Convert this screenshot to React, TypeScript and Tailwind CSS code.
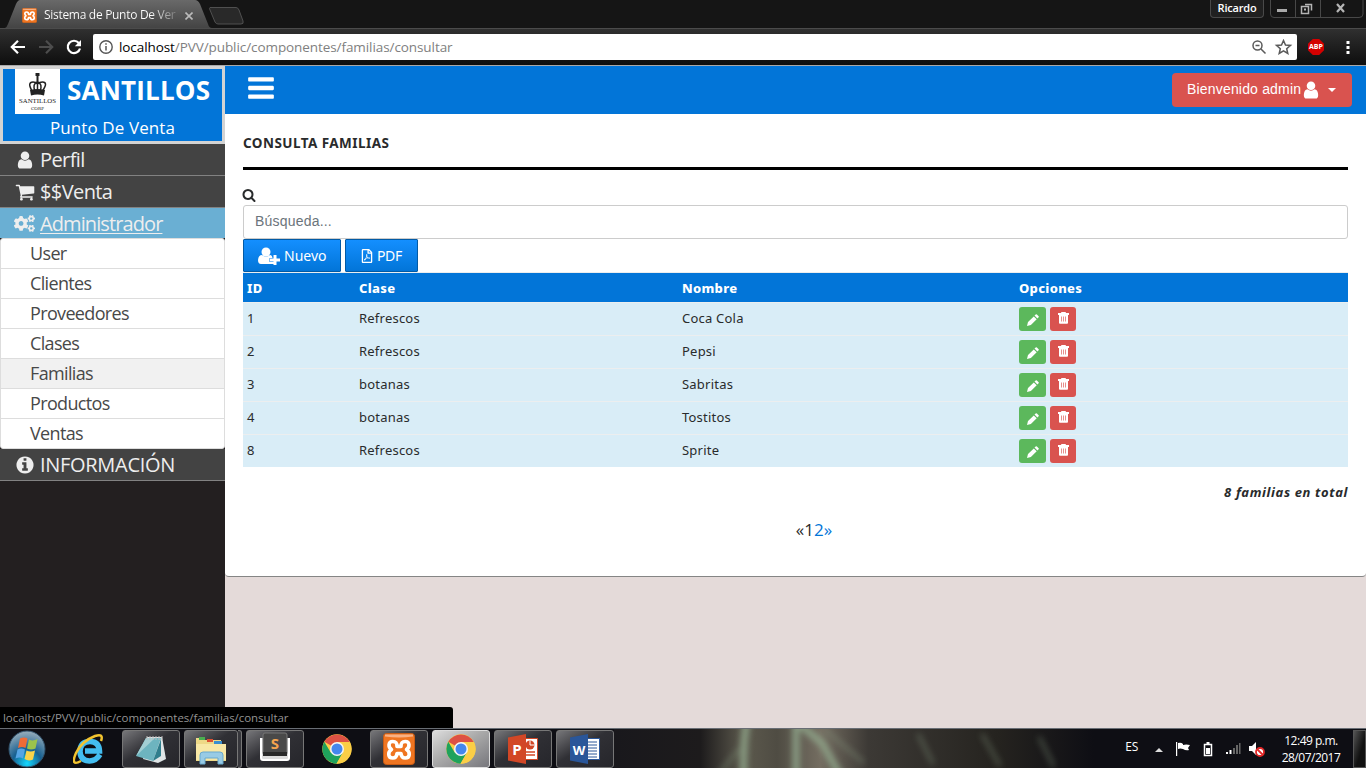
import React from "react";
import { FaCogs, FaRegFilePdf } from "react-icons/fa";

const P = {
  user: "M1536 1399q0 109-62.5 187t-150.5 78h-854q-88 0-150.5-78t-62.5-187q0-85 8.500-160.500t31.500-152 58.500-131 94-89 134.500-34.500q131 128 313 128t313-128q76 0 134.500 34.500t94 89 58.500 131 31.500 152 8.500 160.500zm-256-887q0 159-112.500 271.500t-271.500 112.500-271.500-112.500-112.500-271.500 112.500-271.500 271.500-112.500 271.500 112.500 112.500 271.500z",
  cart: "M704 1536q0 52-38 90t-90 38-90-38-38-90 38-90 90-38 90 38 38 90zm896 0q0 52-38 90t-90 38-90-38-38-90 38-90 90-38 90 38 38 90zm128-1088v512q0 24-16.500 42.500t-40.500 21.500l-1044 122q13 60 13 70 0 16-24 64h920q26 0 45 19t19 45-19 45-45 19h-1024q-26 0-45-19t-19-45q0-11 8-31.500t16-36 21.500-40 15.500-29.500l-177-823h-204q-26 0-45-19t-19-45 19-45 45-19h256q16 0 28.500 6.500t19.500 15.500 13 24.500 8 26 5.500 29.500 4.500 26h1201q26 0 45 19t19 45z",
  bars: "M1664 1344v128q0 26-19 45t-45 19h-1408q-26 0-45-19t-19-45v-128q0-26 19-45t45-19h1408q26 0 45 19t19 45zm0-512v128q0 26-19 45t-45 19h-1408q-26 0-45-19t-19-45v-128q0-26 19-45t45-19h1408q26 0 45 19t19 45zm0-512v128q0 26-19 45t-45 19h-1408q-26 0-45-19t-19-45v-128q0-26 19-45t45-19h1408q26 0 45 19t19 45z",
  search: "M1216 832q0-185-131.500-316.500t-316.500-131.500-316.500 131.500-131.500 316.500 131.500 316.500 316.500 131.500 316.500-131.500 131.500-316.500zm512 832q0 52-38 90t-90 38q-54 0-90-38l-343-342q-179 124-399 124-143 0-273.500-55.500t-225-150-150-225-55.500-273.500 55.500-273.500 150-225 225-150 273.500-55.500 273.500 55.500 225 150 150 225 55.500 273.500q0 220-124 399l343 343q37 37 37 90z",
  info: "M1152 1376v-160q0-14-9-23t-23-9h-96v-512q0-14-9-23t-23-9h-320q-14 0-23 9t-9 23v160q0 14 9 23t23 9h96v320h-96q-14 0-23 9t-9 23v160q0 14 9 23t23 9h448q14 0 23-9t9-23zm-128-896v-160q0-14-9-23t-23-9h-192q-14 0-23 9t-9 23v160q0 14 9 23t23 9h192q14 0 23-9t9-23zm640 416q0 209-103 385.500t-279.500 279.500-385.500 103-385.500-103-279.500-279.500-103-385.500 103-385.500 279.500-279.500 385.500-103 385.500 103 279.500 279.500 103 385.500z",
};

function Fa({ d, className }: { d: string; className: string }) {
  return (
    <svg viewBox="0 0 1792 1792" fill="currentColor" className={`shrink-0 overflow-visible ${className}`}>
      <path d={d} />
    </svg>
  );
}

function Xampp({ className }: { className: string }) {
  return (
    <svg viewBox="0 0 32 32" className={`shrink-0 ${className}`}>
      <rect x=".5" y=".5" width="31" height="31" rx="3" fill="#ef7521" stroke="#c95c14" />
      <path d="M2 1.500h28v2q-14 2-28 0z" fill="#f8b184" />
      <path d="M14 13.500C14 10 13 8.500 9.800 8.500 5 8.500 5 14 8.500 16.500 4.500 19 4.800 25 9.800 25c3 0 4-2 4.200-4.500h4c.2 2.500 1.200 4.500 4.200 4.500 5 0 5.300-6 1.300-8.500 3.500-2.500 3.500-8-1.300-8-3.200 0-4.200 1.500-4.200 5z" fill="none" stroke="#fff" strokeWidth="3.600" strokeLinejoin="round" />
    </svg>
  );
}

function Chrome() {
  return (
    <svg viewBox="0 0 30 30" className="size-[30px]">
      <circle cx="15" cy="15" r="14.700" fill="#fbce46" />
      <path d="M15 15 2.300 7.700A14.700 14.700 0 0 1 27.700 8H15z" fill="#dd5144" />
      <path d="M2.300 7.700A14.700 14.700 0 0 0 14.500 29.700L21 18.500 15 15 8.700 18.500z" fill="#1fa25c" />
      <path d="M15 8h12.700A14.700 14.700 0 0 1 14.500 29.700L21 18.500z" fill="#fbce46" />
      <circle cx="15" cy="15" r="7" fill="#f5f5f5" />
      <circle cx="15" cy="15" r="5.500" fill="#4487ee" />
    </svg>
  );
}

function Browser() {
  return (
    <header className="h-[66px] w-full shrink-0 font-['Open_Sans',sans-serif]">
      <div className="flex h-7 items-start bg-[#151515]">
        <div className="relative flex h-7 w-[212px] items-center pl-[22px]">
          <svg viewBox="0 0 212 28" className="absolute left-0 top-0 h-7 w-[212px]">
            <defs>
              <linearGradient id="tab" x2="0" y2="1"><stop stopColor="#696969" /><stop offset="1" stopColor="#444" /></linearGradient>
            </defs>
            <path d="M0 28H5Q7 27 8 24L16 4Q18 0 20 0H195Q198 0 200 4L208 24Q209 28 212 28Z" fill="url(#tab)" />
          </svg>
          <Xampp className="relative mt-[3px] size-[15px]" />
          <span className="relative mt-[2px] ml-[7px] w-[133px] overflow-hidden whitespace-nowrap bg-linear-to-r from-white from-80% to-[#777] bg-clip-text text-[12px] leading-4 tracking-[-0.3px] text-transparent">Sistema de Punto De Ver</span>
          <svg viewBox="0 0 8 8" className="relative mt-[3px] ml-[8px] size-2"><path d="M.5.500l7 7m0-7l-7 7" stroke="#bbb" strokeWidth="1.600" /></svg>
        </div>
        <svg viewBox="0 0 38 20" className="mt-[6px] -ml-[4px] h-5 w-[38px]"><path d="M2 1.500H28Q30 1.500 31 4L35 15Q36 18 33 18H10Q8 18 7 16L2 4Q1 2 2 1.500Z" fill="#292929" stroke="#505050" /></svg>
        <div className="ml-auto flex">
          <div className="flex h-[18px] w-[54px] items-center justify-center rounded-b-[4px] border border-t-0 border-[#494949] bg-[#202020] text-[11px] font-semibold tracking-[-0.2px] text-white">Ricardo</div>
          <svg viewBox="0 0 94 18" className="mr-[2px] ml-[6px] h-[18px] w-[94px]" fill="none">
            <path d="M.5 0V14Q.5 17.500 4 17.500H89Q93 17.500 93 14V0M25.500 0V17M50.500 0V17" stroke="#484848" />
            <path d="M7 10.500h10" stroke="#aaa" strokeWidth="3" />
            <path d="M35 4.500h6.500v6M31.500 6.500h7v7h-7z" stroke="#b5b5b5" strokeWidth="1.500" />
            <path d="M34 9.500h2" stroke="#b5b5b5" strokeWidth="2" />
            <path d="M67 4l7 8m0-8l-7 8" stroke="#b5b5b5" strokeWidth="2.200" />
          </svg>
        </div>
      </div>
      <div className="flex h-[37px] items-center border-t border-[#4b4b4b] bg-linear-to-b from-[#303030] to-[#0e0e0e]">
        <svg viewBox="0 0 92 24" className="h-6 w-[92px] shrink-0" fill="none" strokeWidth="2.200">
          <path d="M25 12H12m6-6.200L11.800 12l6.200 6.200" stroke="#fff" />
          <path d="M39 12h13m-6-6.200L52.200 12 46 18.200" stroke="#4d4d4d" />
          <path d="M78.800 8A6.200 6.200 0 1 0 80 13.500" stroke="#fff" />
          <path d="M81 5v6.200h-6.200z" fill="#fff" />
        </svg>
        <div className="ml-[1px] flex h-[26px] w-[1204px] items-center rounded-[2px] bg-white pl-[6px] text-[13.500px] text-[#808080]">
          <svg viewBox="0 0 14 14" className="size-[14px]" fill="none" stroke="#555"><circle cx="7" cy="7" r="6.200" strokeWidth="1.400" /><path d="M7 6v4.500M7 3.200v1.600" strokeWidth="1.500" /></svg>
          <span className="ml-[6px] whitespace-nowrap tracking-[-0.08px]"><span className="text-black">localhost</span>/PVV/public/componentes/familias/consultar</span>
          <svg viewBox="0 0 42 16" className="mr-[4px] ml-auto h-4 w-[42px]" fill="none" stroke="#5a5a5a" strokeWidth="1.500">
            <circle cx="6.500" cy="6.500" r="4.500" /><path d="M10 10l4.500 4.500M4.500 6.500h4" /><path d="M32.500 1.500l2 4.500 5 .4-3.800 3.300 1.100 4.800-4.300-2.600-4.300 2.600 1.100-4.800-3.800-3.300 5-.4z" />
          </svg>
        </div>
        <div className="ml-[11px] flex size-4 items-center justify-center bg-[#d40000] text-[7px] font-bold text-white [clip-path:polygon(30%_0,70%_0,100%_30%,100%_70%,70%_100%,30%_100%,0_70%,0_30%)]">ABP</div>
        <svg viewBox="0 0 4 14" className="ml-[22px] h-[14px] w-1" fill="#fff"><path d="M.5 1h3v3h-3zM.5 6h3v3h-3zM.5 11h3v3h-3z" /></svg>
      </div>
      <div className="h-px bg-[#a9a9a9]" />
    </header>
  );
}

function Crown() {
  return (
    <svg viewBox="0 0 45 45" className="size-[45px] bg-white">
      <path d="M20.500 4h4v3h-1v6h-2V7h-1z" fill="#222" />
      <g fill="none" stroke="#222" strokeWidth="1.500"><path d="M17 22q-5-9 1-9 3 0 4.500 2v7m0-7q2-2 5-2 6 0 0 9" /><path d="M20 22q-3-7 2.500-9 5.500 2 2.500 9" /></g>
      <path d="M15 21q7.500-2 15 0l-1 5.500q-6.500-2-13 0z" fill="#222" />
      <text x="22.500" y="34" textAnchor="middle" textLength="37" lengthAdjust="spacingAndGlyphs" fontSize="7" fontFamily="Liberation Serif, serif" fill="#222">SANTILLOS</text>
      <text x="22.500" y="41" textAnchor="middle" textLength="13" lengthAdjust="spacingAndGlyphs" fontSize="5" fontFamily="Liberation Serif, serif" fill="#222">CORP</text>
    </svg>
  );
}

const sub = ["User", "Clientes", "Proveedores", "Clases", "Familias", "Productos", "Ventas"];

function Sidebar() {
  const item = "flex h-8 items-center border-b border-[#828282] bg-[#434343] text-[20px] text-[#eee]";
  return (
    <aside className="flex w-[225px] shrink-0 flex-col bg-[#231f20] font-['Open_Sans',sans-serif]">
      <div className="h-[78px] border-[3px] border-[#d3d3d3] bg-[#0275d8] text-white">
        <div className="flex h-[45px] items-center pl-3"><Crown /><span className="-mt-[4px] ml-[7px] text-[26px] leading-10 font-bold tracking-[0.2px]">SANTILLOS</span></div>
        <div className="text-center text-[17px] leading-[27px] tracking-[0.1px]">Punto De Venta</div>
      </div>
      <div className={item}><Fa d={P.user} className="ml-[15px] size-5" /><span className="ml-[5px] tracking-[-0.6px]">Perfil</span></div>
      <div className={item}><Fa d={P.cart} className="ml-[15px] size-5" /><span className="ml-[5px] tracking-[-0.6px]">$$Venta</span></div>
      <div className="flex h-[30px] items-center bg-[#6aafd3] text-[20px] text-[#eee]"><FaCogs className="ml-[14px] size-[21px]" /><span className="mt-[2px] ml-[5px] tracking-[-0.9px] underline decoration-1 underline-offset-2">Administrador</span></div>
      <ul className="rounded-[3px] border border-[#ddd] bg-white text-[18px] text-[#484848]">
        {sub.map((s) => <li key={s} className={`h-[30px] border-b border-[#ddd] pl-[29px] leading-[29px] tracking-[-0.65px] last:h-[29px] last:border-0 ${s === "Familias" ? "bg-[#f1f1f1]" : ""}`}>{s}</li>)}
      </ul>
      <div className={item}><Fa d={P.info} className="ml-[15px] size-5" /><span className="ml-[5px] tracking-[-0.3px]">INFORMACIÓN</span></div>
    </aside>
  );
}

const rows = [["1", "Refrescos", "Coca Cola"], ["2", "Refrescos", "Pepsi"], ["3", "botanas", "Sabritas"], ["4", "botanas", "Tostitos"], ["8", "Refrescos", "Sprite"]];

function Content() {
  const btn = "flex h-[33px] items-center rounded-[1px] border border-[#025aa5] bg-linear-to-b from-[#148fff] to-[#0275d8] text-[14px] text-white";
  return (
    <main className="flex min-w-0 flex-1 flex-col bg-[#e4dad9] font-['Noto_Sans',sans-serif]">
      <div className="flex h-12 items-start justify-between bg-[#0275d8] pr-[14px] pl-[21px] text-white">
        <Fa d={P.bars} className="mt-[7px] h-[30px] w-[30px]" />
        <button className="mt-[7px] flex h-[34px] w-[180px] items-center rounded-[4px] bg-[#d9534f] pl-[15px] font-['Liberation_Sans',sans-serif] text-[14px] tracking-[0.18px]"><span className="-mt-px">Bienvenido admin</span><Fa d={P.user} className="-mt-px size-5" /><span className="ml-[7px] border-x-4 border-t-4 border-x-transparent border-t-white" /></button>
      </div>
      <section className="h-[463px] rounded-b-[4px] border-b border-[#858585] bg-white px-[18px] text-[#292b2c]">
        <h1 className="h-[53px] pt-[19px] text-[13.500px] leading-5 font-bold tracking-[0.45px]">CONSULTA FAMILIAS</h1>
        <div className="h-[3px] bg-black" />
        <Fa d={P.search} className="mt-[18px] -ml-px size-[14px]" />
        <div className="mt-[3px] h-[34px] rounded-[3px] border border-[#ccc] pl-[11px] font-['Liberation_Sans',sans-serif] text-[14px] leading-[31px] tracking-[0.2px] text-[#6b747b]">Búsqueda...</div>
        <div className="flex gap-1">
          <button className={`${btn} w-[98px] pl-[14px]`}>
            <svg viewBox="0 0 22 18" className="h-[18px] w-[22px]" fill="#fff"><circle cx="8" cy="5" r="4.500" /><path d="M4 8q4 3 8 0 2 0 2.500 3h-3v4h4v2H3Q0 17 0 13 .5 8 4 8zM15.500 8h3v3.500H22v3h-3.500V18h-3v-3.500H12v-3h3.500z" /></svg>
            <span className="ml-1">Nuevo</span>
          </button>
          <button className={`${btn} w-[73px] pl-[14px]`}><FaRegFilePdf className="size-[14px]" /><span className="ml-[3px] tracking-[-0.4px]">PDF</span></button>
        </div>
        <div className="border-t border-[#eceeef] text-[13px]">
          <div className="grid h-[29px] grid-cols-[112px_323px_337px_1fr] bg-[#0275d8] leading-[31px] font-extrabold tracking-[0.3px] text-white *:pl-1">
            <span>ID</span><span>Clase</span><span>Nombre</span><span>Opciones</span>
          </div>
          {rows.map((r) => (
            <div key={r[0]} className="grid h-[33px] grid-cols-[112px_323px_337px_1fr] border-t border-[#eceeef] bg-[#d9edf7] leading-[30px] tracking-[0.22px] *:pl-1">
              <span>{r[0]}</span><span>{r[1]}</span><span>{r[2]}</span>
              <span className="flex gap-1 pt-1">
                <span className="flex h-6 w-[27px] items-center justify-center rounded-[3px] bg-[#5cb85c]"><svg viewBox="0 0 12 12" className="mt-[1px] size-3" fill="#fff"><path d="M8.700.5q.6-.6 1.200 0l1.700 1.700q.5.500 0 1.100l-1.200 1.200-2.900-2.900zM6.800 2.400l2.900 2.900-5.800 5.800L0 12l1-3.900z" /></svg></span>
                <span className="flex h-6 w-[26px] justify-center rounded-[3px] bg-[#d9534f] pt-[5px]"><svg viewBox="0 0 11 12" className="h-3 w-[11px]"><path d="M3.500 0h4l.6 1H11v2H0V1h2.900zM1 3h9v8q0 .7-1 .7H2q-1 0-1-.7z" fill="#fff" /><path d="M3.500 4.500v5M5.500 4.500v5M7.500 4.500v5" stroke="#e78f8c" /></svg></span>
              </span>
            </div>
          ))}
        </div>
        <p className="mt-[15px] text-right text-[13px] leading-5 font-bold tracking-[0.62px] italic">8 familias en total</p>
        <p className="mt-[16px] flex justify-center pl-[37px] font-['Open_Sans',sans-serif] text-[17px] leading-6"><span>«1</span><span className="text-[#0275d8]">2»</span></p>
      </section>
    </main>
  );
}

function TaskButton({ children, className = "" }: { children: React.ReactNode; className?: string }) {
  return <div className={`flex h-[38px] w-[58px] shrink-0 items-center justify-center rounded-[3px] border border-[#777] bg-linear-to-br from-[#77777a] via-[#303035] via-45% to-[#26262b] ${className}`}>{children}</div>;
}

function Office({ word }: { word: boolean }) {
  const c = word ? "#2a5699" : "#d24726";
  return (
    <svg viewBox="0 0 30 30" className="size-[30px]">
      <path d="M17 4.500h12.500v21H17z" fill="#fff" stroke={c} />
      {word ? <path d="M18 8h9M18 11h9M18 14h9M18 17h9M18 20h9M18 23h9" stroke={c} /> : <><circle cx="22" cy="11" r="4.500" fill={c} /><path d="M22 11V6.500M22 11h4.500" stroke="#fff" /><path d="M18 18h9M18 21h9" stroke={c} strokeWidth="1.500" /></>}
      <path d="M0 3.500 18 0v30L0 26.500z" fill={c} />
      <text x="9" y="20.500" textAnchor="middle" fontSize={word ? 13 : 15} fontWeight="bold" fontFamily="Open Sans, sans-serif" fill="#fff">{word ? "W" : "P"}</text>
    </svg>
  );
}

function Taskbar() {
  return (
    <footer className="relative flex h-10 shrink-0 items-center overflow-hidden border-t border-[#686d74] bg-[#0e0e14] font-['Open_Sans',sans-serif] text-white">
      <svg viewBox="0 0 480 40" className="absolute left-[614px] top-0 h-10 w-[480px]" preserveAspectRatio="none">
        <defs>
          <linearGradient id="glow"><stop stopColor="#19181c" /><stop offset=".18" stopColor="#1d1b1c" /><stop offset=".27" stopColor="#5c594d" /><stop offset=".34" stopColor="#4f4c43" /><stop offset=".43" stopColor="#746d61" /><stop offset=".53" stopColor="#3c3935" /><stop offset=".8" stopColor="#25231f" /><stop offset="1" stopColor="#0e0e14" /></linearGradient>
          <filter id="soft" x="-20%" y="-50%" width="140%" height="200%"><feGaussianBlur stdDeviation="3" /></filter>
        </defs>
        <rect width="480" height="40" fill="url(#glow)" />
        <g filter="url(#soft)" fill="none" stroke="#91a88c" strokeWidth="7" opacity=".85">
          <path d="M133-10Q128 20 130 50M182 50V-10M184-6l24 20 20 36" />
          <path d="M125 20L105 45M210 0l40 34M304 5l15 30M368 5l18 32M425 8l15 30" strokeWidth="4" opacity=".4" />
        </g>
      </svg>
      <div className="flex w-[122px] shrink-0 items-center pl-[8px]">
        <svg viewBox="0 0 38 38" className="size-[38px]">
          <defs><radialGradient id="orb" cy=".9" r=".9"><stop stopColor="#13d8ff" /><stop offset=".45" stopColor="#176091" /><stop offset="1" stopColor="#9aaebb" /></radialGradient></defs>
          <circle cx="19" cy="19" r="18" fill="url(#orb)" stroke="#31526c" />
          <path d="M12 8.500q4-2 7.500 0l-2 9.500q-3.500-2-7.500 0z" fill="#ef6b36" /><path d="M21 9.500q4 2 8.500-.5l-2 9.500q-4.500 2-8.500 0z" fill="#9bc34b" /><path d="M9.500 19.500q4-2 7.500 0l-2 9q-3-2-7.500 0z" fill="#55a5e5" /><path d="M18.500 20.500q4 2 8.500 0l-2 9q-4.500 2-8.500-.5z" fill="#f9d44b" />
        </svg>
        <svg viewBox="0 0 32 32" className="ml-[27px] size-8">
          <path d="M27 21.500Q23 28 16.500 28 7 27.500 7 18 7.500 8.500 17 8.500q9 0 9.500 9.500H12" fill="none" stroke="#43bdf0" strokeWidth="5.500" />
          <path d="M28 8Q31 0 22 3 9 8 3 20-3 34 8 28" fill="none" stroke="#f2c32f" strokeWidth="2.500" />
        </svg>
      </div>
      <TaskButton>
        <svg viewBox="0 0 32 30" className="h-[30px] w-8"><path d="M12 3h15l4 22-8 4-15-4z" fill="#dfe5e6" /><path d="M11 4h15L18 27 1 22z" fill="#6db4bf" /><path d="M11 4h9L1 22z" fill="#a2cfd4" /><path d="M12 2v4M15 2v4M18 2v4M21 2v4M24 2v4M27 2v4" stroke="#bbb" /><path d="M26 5 18 27l8-5z" fill="#307e8c" /></svg>
      </TaskButton>
      <TaskButton className="ml-[4px] !w-[54px]">
        <svg viewBox="0 0 34 32" className="h-8 w-[34px]"><path d="M2 5h8l1 2h16v4h5v17H2z" fill="#eed987" /><path d="M5 4h6v3H5z" fill="#4bae4f" /><path d="M13 6h6v3h-6z" fill="#dd5133" /><path d="M20 8h8v3h-8z" fill="#398fd0" /><path d="M2 11h30v16H2z" fill="#f8e8a6" /><path d="M6 31v-9q0-3 3-3h17q3 0 3 3v9h-5v-6H11v6z" fill="#98cbe5" stroke="#69a9cf" /></svg>
      </TaskButton>
      <div className="h-[38px] w-[4px] rounded-r-[3px] border border-l-0 border-[#777] bg-[#38383d]" />
      <TaskButton className="ml-[4px]">
        <svg viewBox="0 0 30 28" className="-mt-1 h-7 w-[30px] overflow-visible"><path d="M1 5v20q0 2 2 2h24q2 0 2-2V5" fill="#ddd" stroke="#fff" strokeWidth="2" /><rect x="3" width="24" height="22" rx="2" fill="#494949" stroke="#777" /><path d="M3 19h24v4H3z" fill="#292929" /><text x="15" y="16" textAnchor="middle" fontSize="15" fontWeight="bold" fontFamily="Open Sans, sans-serif" fill="#f4a34e">S</text></svg>
      </TaskButton>
      <div className="flex w-[66px] shrink-0 justify-center"><Chrome /></div>
      <div className="flex gap-1">
        <TaskButton><Xampp className="size-8" /></TaskButton>
        <TaskButton className="!border-[#ddd] !from-[#ddd] !via-[#aaa] !to-[#77777c]"><Chrome /></TaskButton>
        <TaskButton><Office word={false} /></TaskButton>
        <TaskButton><Office word /></TaskButton>
      </div>
      <span className="relative -mt-[4px] ml-auto text-[12px] tracking-[-0.3px]">ES</span>
      <svg viewBox="0 0 112 20" className="relative ml-[15px] h-5 w-[112px]" fill="#fff">
        <path d="M2 13l4-4 4 4z" fill="#ddd" />
        <path d="M23 3h1.200v14H23zM25 4q3-1 5 1v1q3-1 7 0l-2 3 1 2q-3 1-6-1-3-1-5 0z" />
        <path d="M73 15v-2h2v2zM76.500 15v-4h2v4z" /><path d="M80 15v-6h2v6zM83 15V6h2v9zM86 15V4h1.500v11z" fill="#666" />
        <path d="M51.500 5.500h7v11h-7z" fill="none" stroke="#fff" strokeWidth="1.500" /><path d="M53.500 3h3v2h-3zM53 9h4v6h-4z" />
        <path d="M96 7h3l4-4v13l-4-4h-3z" /><circle cx="107" cy="13" r="4" fill="#fff" stroke="#e22828" strokeWidth="1.800" /><path d="M104 10l6 6" stroke="#e22828" strokeWidth="1.800" />
      </svg>
      <div className="relative ml-[12px] w-[68px] text-center text-[12px] leading-[17px] tracking-[-0.5px]">12:49 p.m.<br />28/07/2017</div>
      <div className="relative ml-[8px] h-[38px] w-[13px] border border-[#555] bg-linear-to-br from-[#555] to-[#111] to-60%" />
    </footer>
  );
}

export default function App() {
  return (
    <div className="relative flex h-[768px] w-[1366px] flex-col overflow-hidden">
      <Browser />
      <div className="flex min-h-0 flex-1"><Sidebar /><Content /></div>
      <Taskbar />
      <div className="absolute top-[707px] left-0 h-[21px] w-[453px] rounded-tr-[3px] bg-black pl-[3px] font-['Open_Sans',sans-serif] text-[11.500px] leading-[21px] tracking-[-0.04px] text-[#939393]">localhost/PVV/public/componentes/familias/consultar</div>
    </div>
  );
}
